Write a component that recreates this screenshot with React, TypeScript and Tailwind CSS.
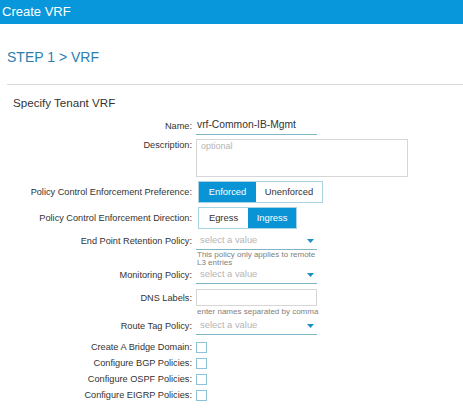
const font = { fontFamily: '"Liberation Sans", Arial, sans-serif' };

function Label({ children }: { children: React.ReactNode }) {
  return (
    <div className="w-[192px] shrink-0 text-right text-[9.2px] leading-[12px] text-[#333]">
      {children}
    </div>
  );
}

function Arrow() {
  return (
    <svg width="7" height="4" viewBox="0 0 7 4" className="mr-[3px]">
      <path d="M0 0 L7 0 L3.5 4 Z" fill="#1d8fc4" />
    </svg>
  );
}

function SelectBox() {
  return (
    <div className="flex h-[18px] w-[121px] items-center justify-between border-b border-[#7fb5c6] pl-[4px]">
      <span className="text-[9.4px] text-[#b5b5b5]">select a value</span>
      <Arrow />
    </div>
  );
}

function SelectRow({ label, mt }: { label: string; mt: string }) {
  return (
    <div className={`flex items-center gap-1 ${mt}`}>
      <Label>{label}</Label>
      <SelectBox />
    </div>
  );
}

function CheckRow({ label }: { label: string }) {
  return (
    <div className="flex h-[16px] items-center gap-1">
      <Label>{label}</Label>
      <div className="h-[11px] w-[11px] border border-[#8cc3d6] bg-white" />
    </div>
  );
}

export default function App() {
  return (
    <div className="h-[412px] w-[463px] overflow-hidden bg-white" style={font}>
      <div className="flex h-6 items-center bg-[#0897db] pl-[2px] text-[13px] text-white">
        Create VRF
      </div>

      <div className="mt-[24px] pl-[7px] text-[14px] leading-[18px] text-[#2b7fae]">STEP 1 &gt; VRF</div>

      <div className="ml-[7px] mt-[18px] border-t border-[#d9d9d9]" />

      <div className="mt-[11px] pl-[13px] text-[11.6px] leading-[14px] text-[#333]">Specify Tenant VRF</div>

      <div className="flex flex-col">
        {/* name */}
        <div className="mt-[6px] flex items-center gap-1">
          <Label>Name:</Label>
          <div className="flex h-[19px] w-[121px] items-center border-b border-[#7fb5c6] pl-[1px] text-[10.3px] text-[#333]">
            vrf-Common-IB-Mgmt
          </div>
        </div>

        {/* description */}
        <div className="mt-[4px] flex items-start gap-1">
          <Label>Description:</Label>
          <div className="h-[38px] w-[212px] border border-[#d6d6d6] px-[4px] pt-[1px] text-[9px] leading-[11px] text-[#b5b5b5]">
            optional
          </div>
        </div>

        {/* preference */}
        <div className="mt-[4px] flex items-center gap-1">
          <Label>Policy Control Enforcement Preference:</Label>
          <div className="ml-[2px] flex h-[22px] border border-[#a9d3e2] text-[9.4px]">
            <div className="flex w-[57px] items-center justify-center bg-[#0a94d6] text-white">Enforced</div>
            <div className="flex w-[66px] items-center justify-center text-[#333]">Unenforced</div>
          </div>
        </div>

        {/* direction */}
        <div className="mt-[4px] flex items-center gap-1">
          <Label>Policy Control Enforcement Direction:</Label>
          <div className="ml-[2px] flex h-[22px] border border-[#a9d3e2] text-[9.4px]">
            <div className="flex w-[49px] items-center justify-center text-[#333]">Egress</div>
            <div className="flex w-[48px] items-center justify-center bg-[#0a94d6] text-white">Ingress</div>
          </div>
        </div>

        {/* end point */}
        <div className="mt-[3px] flex items-start gap-1">
          <div className="flex h-[18px] items-center">
            <Label>End Point Retention Policy:</Label>
          </div>
          <div className="flex flex-col">
            <SelectBox />
            <div className="mt-[1px] pl-[1px] text-[8px] leading-[7.5px] text-[#808080]">
              This policy only applies to remote
              <br />
              L3 entries
            </div>
          </div>
        </div>

        <SelectRow label="Monitoring Policy:" mt="mt-0" />

        {/* dns */}
        <div className="mt-[5px] flex items-start gap-1">
          <div className="flex h-[17px] items-center">
            <Label>DNS Labels:</Label>
          </div>
          <div className="flex flex-col">
            <div className="h-[17px] w-[121px] border border-[#d6d6d6]" />
            <div className="mt-[2px] pl-[1px] text-[8px] leading-[8px] text-[#808080]">
              enter names separated by comma
            </div>
          </div>
        </div>

        <SelectRow label="Route Tag Policy:" mt="mt-[1px]" />

        <div className="mt-[4px] flex flex-col">
          <CheckRow label="Create A Bridge Domain:" />
          <CheckRow label="Configure BGP Policies:" />
          <CheckRow label="Configure OSPF Policies:" />
          <CheckRow label="Configure EIGRP Policies:" />
        </div>
      </div>
    </div>
  );
}
